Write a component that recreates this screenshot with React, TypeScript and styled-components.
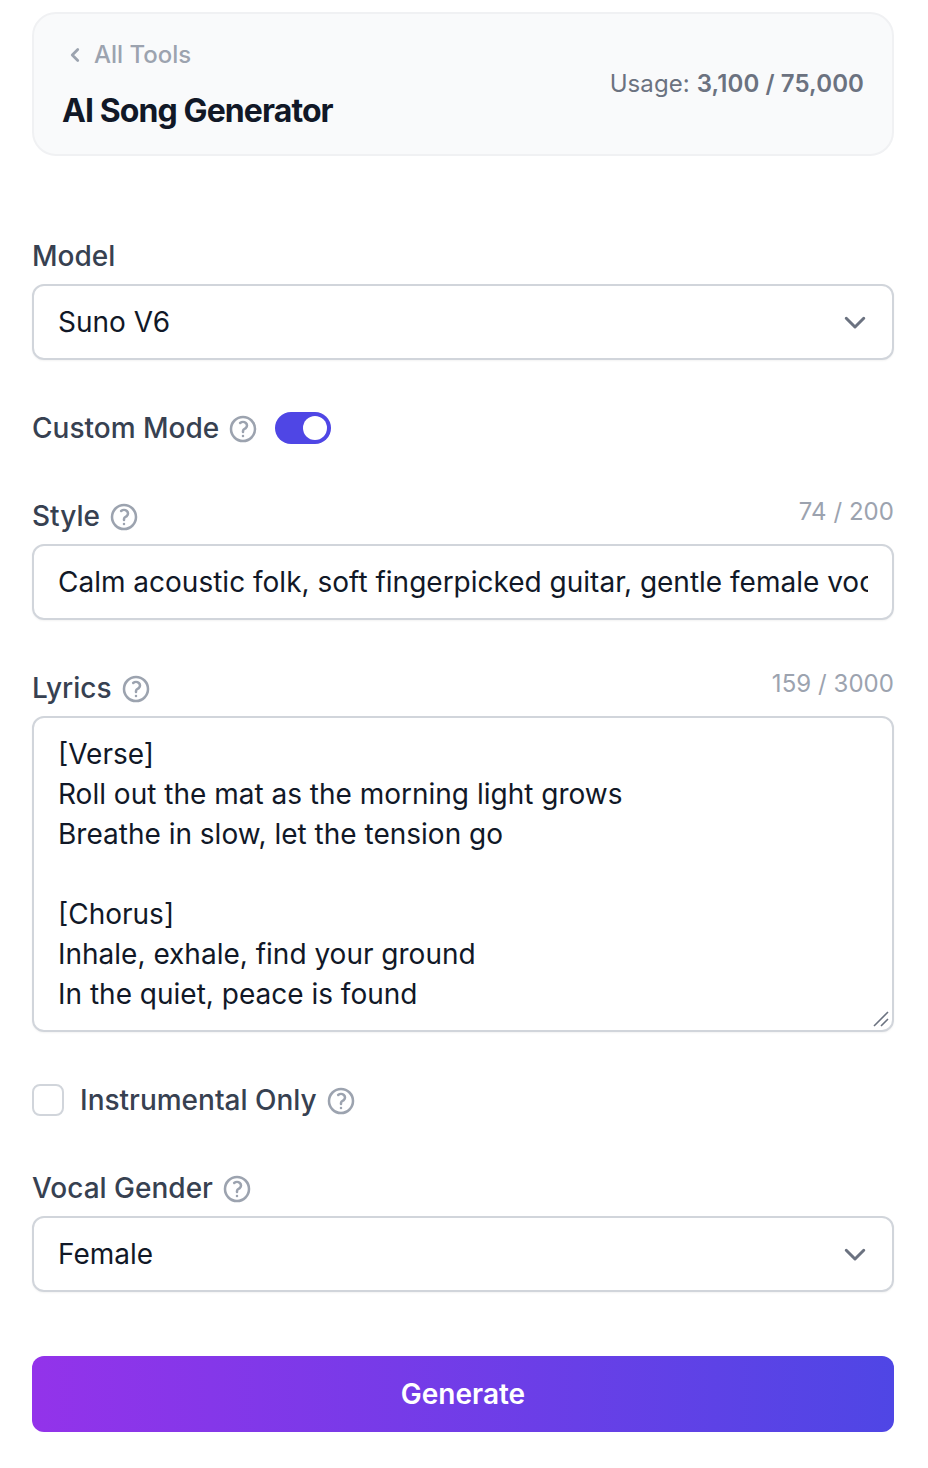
import React from 'react'
import styled, { createGlobalStyle } from 'styled-components'

const GlobalStyle = createGlobalStyle`
  html, body {
    margin: 0;
    padding: 0;
    background: #ffffff;
  }
  * {
    box-sizing: border-box;
  }
  body {
    font-family: Inter, "Liberation Sans", sans-serif;
    -webkit-font-smoothing: antialiased;
  }
`

const HelpIcon = () => (
  <HelpSvg viewBox="0 0 24 24" fill="none" stroke="currentColor" strokeWidth={1.9} strokeLinecap="round" strokeLinejoin="round">
    <path d="M9.879 7.519c1.171-1.025 3.071-1.025 4.242 0 1.172 1.025 1.172 2.687 0 3.712-.203.179-.43.326-.67.442-.745.361-1.45.999-1.45 1.827v.75M21 12a9 9 0 11-18 0 9 9 0 0118 0zm-9 5.25h.008v.008H12v-.008z" />
  </HelpSvg>
)

const Chevron = () => (
  <ChevronSvg viewBox="0 0 24 24" fill="none" stroke="#6b7280" strokeWidth={2.4} strokeLinecap="round" strokeLinejoin="round">
    <path d="M5 9l7 7 7-7" />
  </ChevronSvg>
)

const App: React.FC = () => {
  return (
    <Page>
      <GlobalStyle />
      <HeaderCard>
        <HeaderLeft>
          <BackLink>
            <svg width="22" height="22" viewBox="0 0 24 24" fill="none" stroke="#9ca3af" strokeWidth={3} strokeLinecap="round" strokeLinejoin="round">
              <path d="M15 6l-6 6 6 6" />
            </svg>
            All Tools
          </BackLink>
          <Title>AI Song Generator</Title>
        </HeaderLeft>
        <Usage>
          Usage: <strong>3,100 / 75,000</strong>
        </Usage>
      </HeaderCard>

      <Field $top={84}>
        <LabelRow>
          <Label>Model</Label>
        </LabelRow>
        <SelectBox type="button">
          Suno V6
          <Chevron />
        </SelectBox>
      </Field>

      <InlineRow $top={52}>
        <Label>Custom Mode</Label>
        <HelpIcon />
        <Toggle>
          <Knob />
        </Toggle>
      </InlineRow>

      <Field $top={56}>
        <LabelRow>
          <LabelGroup>
            <Label>Style</Label>
            <HelpIcon />
          </LabelGroup>
          <Counter>74 / 200</Counter>
        </LabelRow>
        <TextInput readOnly value="Calm acoustic folk, soft fingerpicked guitar, gentle female vocals, warm and peaceful" />
      </Field>

      <Field $top={52}>
        <LabelRow>
          <LabelGroup>
            <Label>Lyrics</Label>
            <HelpIcon />
          </LabelGroup>
          <Counter>159 / 3000</Counter>
        </LabelRow>
        <LyricsWrap>
          <LyricsArea
            readOnly
            value={`[Verse]
Roll out the mat as the morning light grows
Breathe in slow, let the tension go

[Chorus]
Inhale, exhale, find your ground
In the quiet, peace is found`}
          />
          <ResizeGrip viewBox="0 0 16 16" fill="none" stroke="#6b7280" strokeWidth={1.6}>
            <path d="M1 15L15 1M8 15l7-7" />
          </ResizeGrip>
        </LyricsWrap>
      </Field>

      <InlineRow $top={52}>
        <CheckBox />
        <Label>Instrumental Only</Label>
        <HelpIcon />
      </InlineRow>

      <Field $top={56}>
        <LabelRow>
          <LabelGroup>
            <Label>Vocal Gender</Label>
            <HelpIcon />
          </LabelGroup>
        </LabelRow>
        <SelectBox type="button">
          Female
          <Chevron />
        </SelectBox>
      </Field>

      <GenerateButton type="button">Generate</GenerateButton>
    </Page>
  )
}

export default App

const Page = styled.div`
  width: 928px;
  height: 1468px;
  padding: 12px 34px 0 32px;
  display: flex;
  flex-direction: column;
  overflow: hidden;
`

const HeaderCard = styled.div`
  height: 144px;
  padding: 0 28px;
  display: flex;
  justify-content: space-between;
  align-items: center;
  background: #f9fafb;
  border: 2px solid #f0f1f3;
  border-radius: 24px;
`

const HeaderLeft = styled.div`
  margin-top: 1px;
  display: flex;
  flex-direction: column;
  gap: 20px;
`

const BackLink = styled.div`
  display: flex;
  align-items: center;
  gap: 8px;
  padding-left: 2px;
  font-size: 24px;
  line-height: 32px;
  font-weight: 500;
  color: #9ca3af;
`

const Title = styled.h1`
  margin: 0;
  font-size: 32px;
  line-height: 40px;
  font-weight: 700;
  letter-spacing: -0.9px;
  color: #111827;
`

const Usage = styled.div`
  font-size: 24px;
  line-height: 36px;
  letter-spacing: 0.1px;
  color: #6b7280;

  strong {
    font-weight: 600;
    color: #6b7280;
  }
`

const Field = styled.div<{ $top: number }>`
  margin-top: ${(p) => p.$top}px;
  display: flex;
  flex-direction: column;
`

const InlineRow = styled.div<{ $top: number }>`
  margin-top: ${(p) => p.$top}px;
  height: 32px;
  display: flex;
  align-items: center;
  gap: 8px;
`

const LabelRow = styled.div`
  height: 32px;
  margin-bottom: 12px;
  display: flex;
  justify-content: space-between;
  align-items: center;
`

const LabelGroup = styled.div`
  display: flex;
  align-items: center;
  gap: 8px;
  height: 32px;
`

const Label = styled.label`
  font-size: 28px;
  line-height: 32px;
  font-weight: 500;
  color: #374151;
`

const HelpSvg = styled.svg`
  width: 32px;
  height: 32px;
  margin-top: 2px;
  color: #9ca3af;
  flex-shrink: 0;
`

const ChevronSvg = styled.svg`
  width: 30px;
  height: 30px;
  margin-right: -2px;
`

const Counter = styled.span`
  font-size: 24px;
  line-height: 32px;
  letter-spacing: 0.05px;
  color: #9ca3af;
  margin-top: -8px;
`

const controlBase = `
  width: 100%;
  background: #ffffff;
  border: 2px solid #d1d5db;
  border-radius: 12px;
  font-family: Inter, "Liberation Sans", sans-serif;
  font-size: 28px;
  color: #111827;
  outline: none;
  box-shadow: 0 1px 2px rgba(0, 0, 0, 0.05);
`

const SelectBox = styled.button`
  ${controlBase}
  height: 76px;
  padding: 0 24px;
  display: flex;
  justify-content: space-between;
  align-items: center;
  text-align: left;
`

const TextInput = styled.input`
  ${controlBase}
  height: 76px;
  padding: 0 24px;
`

const LyricsWrap = styled.div`
  position: relative;
`

const LyricsArea = styled.textarea`
  ${controlBase}
  display: block;
  height: 316px;
  padding: 16px 24px;
  line-height: 40px;
  resize: none;
`

const ResizeGrip = styled.svg`
  position: absolute;
  right: 5px;
  bottom: 5px;
  width: 16px;
  height: 16px;
`

const Toggle = styled.div`
  width: 56px;
  height: 32px;
  margin-left: 8px;
  padding: 4px;
  display: flex;
  justify-content: flex-end;
  background: #4f46e5;
  border-radius: 16px;
`

const Knob = styled.div`
  width: 24px;
  height: 24px;
  border-radius: 50%;
  background: #ffffff;
`

const CheckBox = styled.div`
  width: 32px;
  height: 32px;
  margin-right: 8px;
  background: #ffffff;
  border: 2px solid #d1d5db;
  border-radius: 8px;
`

const GenerateButton = styled.button`
  margin-top: 64px;
  height: 76px;
  width: 100%;
  border: none;
  border-radius: 12px;
  background: linear-gradient(to right, #9333ea, #4f46e5);
  font-family: Inter, "Liberation Sans", sans-serif;
  font-size: 28px;
  font-weight: 600;
  color: #ffffff;
`
